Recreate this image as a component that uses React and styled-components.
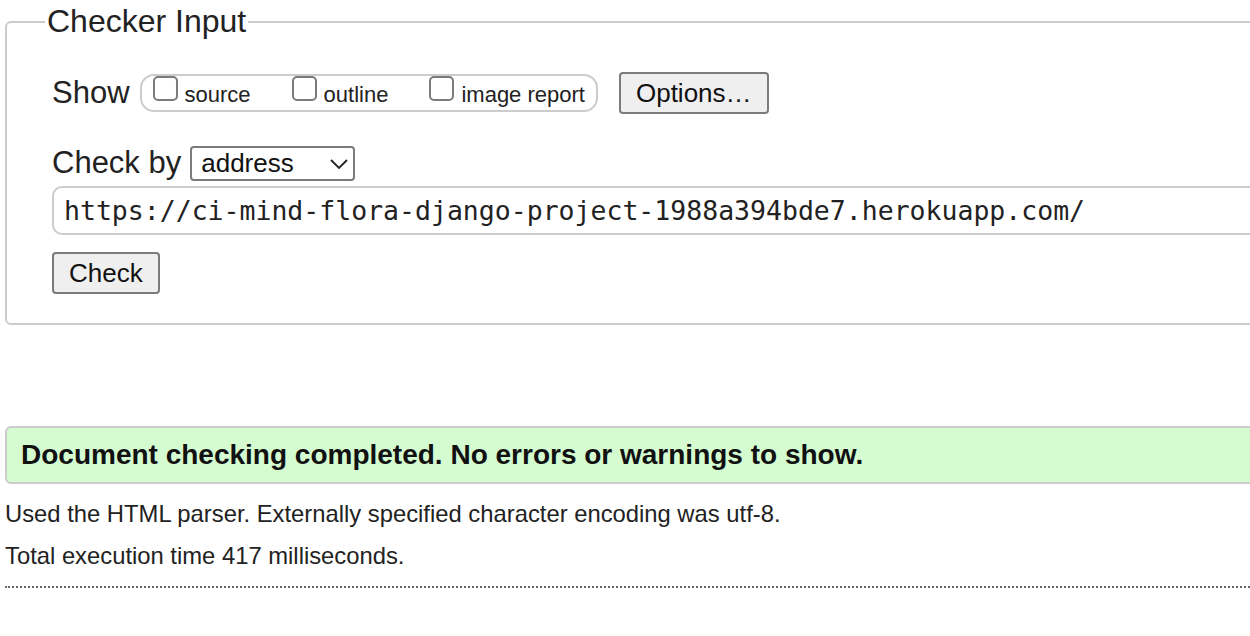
import React from "react";
import styled, { createGlobalStyle } from "styled-components";

const GlobalStyle = createGlobalStyle`
  html, body {
    margin: 0;
    padding: 0;
    overflow: hidden;
    background: #fff;
  }
  body {
    font-family: "Liberation Sans", Arial, Helvetica, sans-serif;
    color: #222;
  }
`;

const Page = styled.div`
  width: 1300px;
  padding: 3px 0 0 5px;
`;

const Fieldset = styled.fieldset`
  margin: 0;
  padding: 0 38px 29px;
  border: 2px solid #ccc;
  border-radius: 6px;
  display: flex;
  flex-direction: column;
  align-items: flex-start;
`;

const Legend = styled.legend`
  font-size: 32px;
  line-height: 37px;
  padding: 0 2px;
  color: #222;
`;

const Row = styled.div`
  display: flex;
  align-items: center;
  margin-top: ${(p) => p.$top}px;
  padding-left: 7px;
  width: 100%;
  box-sizing: border-box;
`;

const Label = styled.span`
  font-size: 31px;
  line-height: 36px;
  color: #222;
  margin-right: ${(p) => p.$gap}px;
`;

const ShowGroup = styled.div`
  display: flex;
  align-items: flex-start;
  gap: 41px;
  height: 38px;
  box-sizing: border-box;
  padding: 0 11px;
  border: 2px solid #ccc;
  border-radius: 14px;
`;

const CheckItem = styled.label`
  display: flex;
  align-items: flex-start;
  gap: 7px;
`;

const Box = styled.input.attrs({ type: "checkbox" })`
  appearance: none;
  margin: 0;
  width: 25px;
  height: 25px;
  box-sizing: border-box;
  border: 2px solid #7b7b7b;
  border-radius: 5px;
  background: #fff;
`;

const CheckText = styled.span`
  font-size: 22px;
  line-height: 25px;
  margin-top: 6px;
  color: #222;
`;

const Button = styled.button`
  font-family: "Liberation Sans", Arial, Helvetica, sans-serif;
  font-size: 26px;
  color: #111;
  height: 42px;
  padding: 0 ${(p) => p.$pad}px;
  margin-left: ${(p) => p.$left || 0}px;
  background: #efefef;
  border: 2px solid #7b7b7b;
  border-radius: 4px;
`;

const SelectWrap = styled.div`
  position: relative;
  width: 165px;
  height: 35px;
`;

const Select = styled.select`
  appearance: none;
  width: 100%;
  height: 100%;
  box-sizing: border-box;
  margin: 0;
  padding: 0 0 0 9px;
  font-family: "Liberation Sans", Arial, Helvetica, sans-serif;
  font-size: 26px;
  color: #111;
  background: #fff;
  border: 2px solid #7b7b7b;
  border-radius: 4px;
`;

const Chevron = styled.svg`
  position: absolute;
  right: 6px;
  top: 12px;
  pointer-events: none;
`;

const UrlInput = styled.input`
  width: 100%;
  height: 49px;
  box-sizing: border-box;
  margin: 0;
  padding: 0 10px;
  font-family: "DejaVu Sans Mono", "Liberation Mono", monospace;
  font-size: 26.5px;
  color: #222;
  border: 2px solid #ccc;
  border-radius: 10px;
  outline: none;
`;

const Success = styled.div`
  margin-top: 101px;
  height: 58px;
  box-sizing: border-box;
  padding: 0 14px;
  display: flex;
  align-items: center;
  background: #d5fcd1;
  border: 2px solid #ccc;
  border-radius: 6px;
  font-size: 28px;
  font-weight: bold;
  color: #111;
`;

const Info = styled.p`
  margin: 0;
  font-size: 23.8px;
  line-height: 41.5px;
  color: #222;
`;

const Info1 = styled(Info)`
  margin-top: 9px;
`;

const Rule = styled.hr`
  margin: 10px 0 0;
  border: 0;
  border-bottom: 2px dotted #666;
  height: 0;
`;

const checks = ["source", "outline", "image report"];

export default function App() {
  return (
    <>
      <GlobalStyle />
      <Page>
        <Fieldset>
          <Legend>Checker Input</Legend>
          <Row $top={32}>
            <Label $gap={10}>Show</Label>
            <ShowGroup>
              {checks.map((c) => (
                <CheckItem key={c}>
                  <Box />
                  <CheckText>{c}</CheckText>
                </CheckItem>
              ))}
            </ShowGroup>
            <Button $pad={15} $left={21}>
              Options…
            </Button>
          </Row>
          <Row $top={31}>
            <Label $gap={9}>Check by</Label>
            <SelectWrap>
              <Select defaultValue="address">
                <option value="address">address</option>
                <option value="file">file upload</option>
                <option value="text">text input</option>
              </Select>
              <Chevron width="20" height="12" viewBox="0 0 20 12">
                <path
                  d="M2 2 L10 10 L18 2"
                  fill="none"
                  stroke="#222"
                  strokeWidth="1.8"
                />
              </Chevron>
            </SelectWrap>
          </Row>
          <Row $top={5}>
            <UrlInput
              readOnly
              value="https://ci-mind-flora-django-project-1988a394bde7.herokuapp.com/"
            />
          </Row>
          <Row $top={17}>
            <Button $pad={15}>Check</Button>
          </Row>
        </Fieldset>
        <Success>
          Document checking completed. No errors or warnings to show.
        </Success>
        <Info1>
          Used the HTML parser. Externally specified character encoding was
          utf-8.
        </Info1>
        <Info>Total execution time 417 milliseconds.</Info>
        <Rule />
      </Page>
    </>
  );
}
